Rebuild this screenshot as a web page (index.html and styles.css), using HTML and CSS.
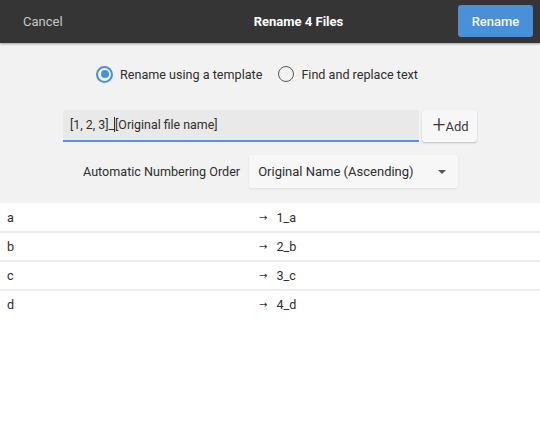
FILE: index.html
```html
<!DOCTYPE html>
<html lang="en">
<head>
    <meta charset="UTF-8">
    <meta name="viewport" content="width=device-width, initial-scale=1.0">
    <title>Rename 4 Files</title>
    <link rel="stylesheet" href="styles.css">
</head>
<body>
    <!-- Header bar -->
    <header class="header-bar">
        <button class="btn-cancel">Cancel</button>
        <div class="header-title">Rename 4 Files</div>
        <button class="btn-rename">Rename</button>
    </header>

    <div class="options">
        <!-- Mode selection -->
        <div class="mode-row">
            <label class="radio checked"><span class="radio-dot"></span>Rename using a template</label>
            <label class="radio"><span class="radio-dot"></span>Find and replace text</label>
        </div>

        <!-- Template entry -->
        <div class="template-row">
            <div class="template-input">[1, 2, 3]_<span class="caret"></span>[Original file name]</div>
            <button class="btn-add"><span class="plus">+</span>Add</button>
        </div>

        <!-- Numbering order -->
        <div class="order-row">
            <span class="order-label">Automatic Numbering Order</span>
            <div class="order-select">
                <span>Original Name (Ascending)</span>
                <span class="select-arrow"></span>
            </div>
        </div>
    </div>

    <!-- Preview list -->
    <div class="preview-list">
        <div class="preview-row"><span class="old-name">a</span><span class="new-name"><span class="arrow">→</span>1_a</span></div>
        <div class="preview-row"><span class="old-name">b</span><span class="new-name"><span class="arrow">→</span>2_b</span></div>
        <div class="preview-row"><span class="old-name">c</span><span class="new-name"><span class="arrow">→</span>3_c</span></div>
        <div class="preview-row"><span class="old-name">d</span><span class="new-name"><span class="arrow">→</span>4_d</span></div>
    </div>
</body>
</html>
```

FILE: styles.css
```css
/* Base */
body {
    margin: 0;
    font-family: Roboto, 'Liberation Sans', sans-serif;
    font-size: 12.6px;
    color: #2e2e2e;
    background: #ffffff;
    height: 428px;
    overflow: hidden;
}

button {
    font-family: inherit;
    font-size: 13px;
    border: none;
    cursor: pointer;
}

/* Header */
.header-bar {
    height: 43px;
    background: #353535;
    display: flex;
    align-items: center;
    justify-content: space-between;
    padding: 0 7px 0 23px;
    box-shadow: 0 1px 2px rgba(0, 0, 0, 0.35);
    position: relative;
    z-index: 1;
}

.btn-cancel {
    background: none;
    color: #c8c8c8;
    padding: 0;
    width: 76px;
    text-align: left;
}

.header-title {
    color: #ffffff;
    font-weight: 700;
    font-size: 13px;
    margin-left: 40px;
}

.btn-rename {
    background: #4a90d9;
    color: #f4f8fd;
    font-weight: 500;
    height: 32px;
    width: 75px;
    border-radius: 3px;
    margin-top: -1px;
}

/* Options area */
.options {
    background: #f2f2f2;
    padding-top: 22px;
    padding-bottom: 15px;
}

.mode-row {
    display: flex;
    justify-content: center;
    gap: 16px;
    margin-right: 26px;
    height: 18px;
    align-items: center;
}

.radio {
    display: flex;
    align-items: center;
    gap: 7px;
    color: #2e2e2e;
}

.radio-dot {
    width: 14px;
    height: 14px;
    border: 1.5px solid #555;
    border-radius: 50%;
    box-sizing: content-box;
    position: relative;
}

.radio.checked .radio-dot {
    border: 2px solid #4a90d9;
    width: 13px;
    height: 13px;
}

.radio.checked .radio-dot::after {
    content: "";
    position: absolute;
    left: 2.5px;
    top: 2.5px;
    width: 8px;
    height: 8px;
    border-radius: 50%;
    background: #4a90d9;
}

.template-row {
    display: flex;
    margin: 27px 0 0 63px;
    gap: 3px;
}

.template-input {
    width: 349px;
    height: 30px;
    line-height: 30px;
    padding-left: 7px;
    background: #e9e9e9;
    border-bottom: 2px solid #5294e2;
    border-radius: 2px 2px 0 0;
    color: #2e2e2e;
    font-size: 12.4px;
}

.caret {
    display: inline-block;
    width: 1px;
    height: 15px;
    background: #2e2e2e;
    vertical-align: -3px;
}

.btn-add {
    width: 55px;
    height: 32px;
    background: #f7f7f7;
    color: #3a3a3a;
    border-radius: 3px;
    box-shadow: 0 1px 2px rgba(0, 0, 0, 0.22);
    padding: 0 0 0 2px;
    display: flex;
    align-items: center;
    justify-content: center;
}

.plus {
    font-size: 23px;
    font-weight: 300;
    line-height: 1;
    margin-top: -2px;
}

.order-row {
    display: flex;
    align-items: center;
    margin: 13px 0 0 83px;
    gap: 9px;
}

.order-select {
    width: 188px;
    height: 33px;
    background: #f7f7f7;
    box-shadow: 0 1px 2px rgba(0, 0, 0, 0.08);
    border-radius: 2px;
    display: flex;
    align-items: center;
    justify-content: space-between;
    padding: 0 12px 0 9px;
    font-size: 13px;
}

.select-arrow {
    width: 0;
    height: 0;
    border-left: 4px solid transparent;
    border-right: 4px solid transparent;
    border-top: 4px solid #555;
}

/* Preview list */
.preview-list {
    background: #ffffff;
    padding-top: 1px;
}

.preview-row {
    display: grid;
    grid-template-columns: 259px 1fr;
    height: 27px;
    align-items: center;
    border-bottom: 2px solid #ececec;
}

.preview-row:last-child {
    border-bottom: none;
}

.old-name {
    padding-left: 7px;
}

.arrow {
    font-family: 'DejaVu Sans', sans-serif;
    font-size: 10px;
    margin-right: 9px;
    vertical-align: 1px;
}
```
